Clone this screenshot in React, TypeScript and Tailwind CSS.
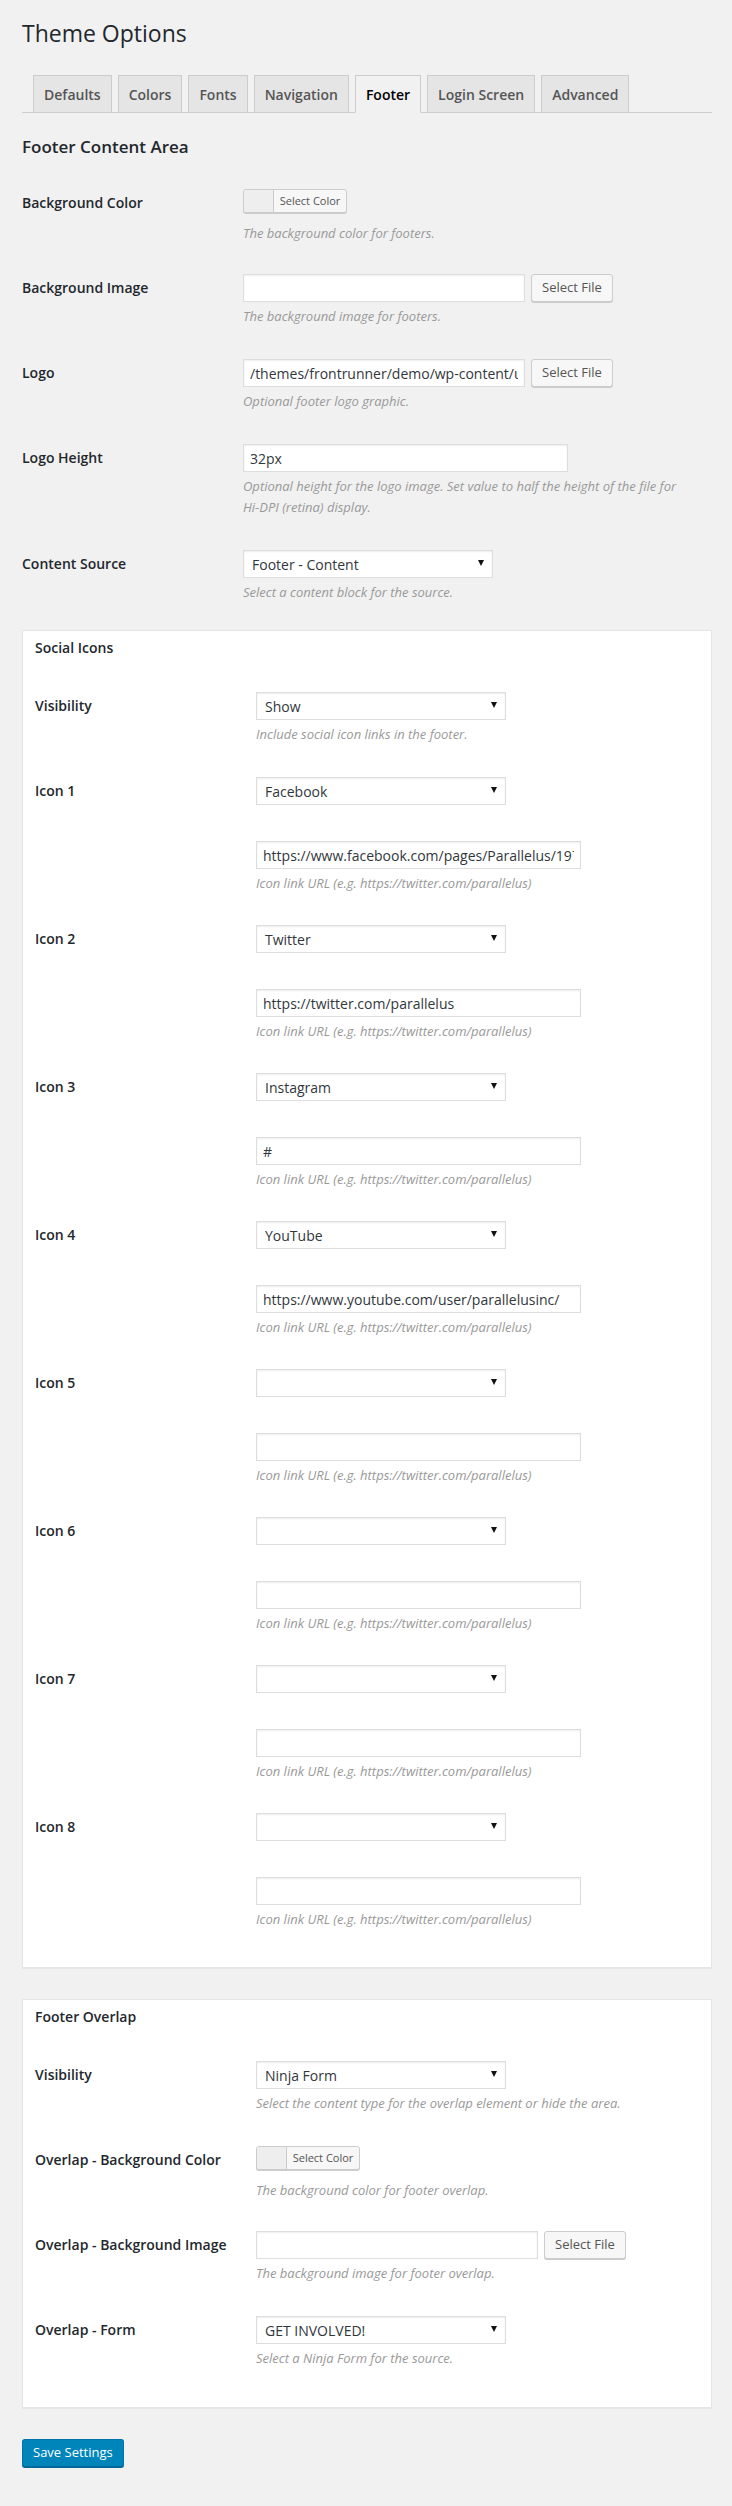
import React from "react";

const Label = ({ children }: { children?: React.ReactNode }) => (
  <div className="w-[221px] shrink-0 pt-[20px] text-[14px] leading-[18px] font-semibold text-[#23282d]">
    {children}
  </div>
);

const Desc = ({ children }: { children: React.ReactNode }) => (
  <p className="mt-[4px] max-w-[459px] text-[13px] leading-[21px] italic text-[#999]">{children}</p>
);

const TextInput = ({ value = "", w }: { value?: string; w: string }) => (
  <input
    defaultValue={value}
    className={`block h-[28px] ${w} border border-[#ddd] bg-white px-[6px] text-[14px] text-[#32373c] shadow-[inset_0_1px_2px_rgba(0,0,0,0.07)] outline-none`}
  />
);

const Select = ({ value = "" }: { value?: string }) => (
  <div className="flex h-[28px] w-[250px] items-center justify-between border border-[#ddd] bg-white pl-[8px] pr-[8px] text-[14px] text-[#32373c] shadow-[inset_0_1px_2px_rgba(0,0,0,0.07)]">
    <span>{value}</span>
    <svg width="6" height="6" viewBox="0 0 6 6" className="-mt-[3px]">
      <polygon points="0,0 6,0 3,6" fill="#111" />
    </svg>
  </div>
);

const FileButton = () => (
  <button className="ml-[6px] block h-[28px] rounded-[3px] border border-[#ccc] bg-[#f7f7f7] px-[10px] text-[13px] text-[#555] shadow-[0_1px_0_#ccc]">
    Select File
  </button>
);

const ColorPicker = () => (
  <div className="h-[30px]">
    <div className="flex h-[24px] w-[104px] overflow-hidden rounded-[3px] border border-[#ccc] bg-[#f7f7f7] shadow-[0_1px_0_#ccc]">
      <div className="w-[30px] shrink-0 border-r border-[#ccc] bg-[#eeeeee]" />
      <div className="flex flex-1 items-center justify-center text-[11px] text-[#555]">Select Color</div>
    </div>
  </div>
);

const Row = ({ label, children, pb = "pb-[17px]" }: { label: string; children: React.ReactNode; pb?: string }) => (
  <div className="flex">
    <Label>{label}</Label>
    <div className={`flex-1 pt-[15px] ${pb}`}>{children}</div>
  </div>
);

const IconRow = ({ n, sel, url }: { n: number; sel?: string; url?: string }) => (
  <div className="flex">
    <Label>{`Icon ${n}`}</Label>
    <div className="flex-1 pt-[15px] pb-[16px]">
      <Select value={sel} />
      <div className="mt-[36px]">
        <TextInput value={url} w="w-[325px]" />
      </div>
      <Desc>Icon link URL (e.g. https://twitter.com/parallelus)</Desc>
    </div>
  </div>
);

const Box = ({ title, children, mt }: { title: string; children: React.ReactNode; mt: string }) => (
  <div className={`${mt} border border-[#e5e5e5] bg-white px-[12px] pt-[7px] pb-[21px] shadow-[0_1px_1px_rgba(0,0,0,0.04)]`}>
    <h3 className="mb-[19px] text-[14px] leading-[20px] font-semibold text-[#23282d]">{title}</h3>
    {children}
  </div>
);

export default function App() {
  const tabs = ["Defaults", "Colors", "Fonts", "Navigation", "Footer", "Login Screen", "Advanced"];
  return (
    <div className="min-h-[2506px] bg-[#f1f1f1] font-['Open_Sans',sans-serif] text-[#444]">
      <div className="pl-[22px] pr-[20px] pb-[42px]">
        <h1 className="pt-[19px] text-[23px] leading-[29px] font-normal text-[#23282d]">Theme Options</h1>

        <div className="mt-[27px] flex items-end gap-[6px] border-b border-[#ccc] pl-[11px]">
          {tabs.map((t) => (
            <div
              key={t}
              className={
                t === "Footer"
                  ? "-mb-px flex h-[38px] items-center border border-[#ccc] border-b-[#f1f1f1] bg-[#f1f1f1] px-[10px] text-[14px] font-semibold text-[#000]"
                  : "-mb-px flex h-[38px] items-center border border-[#ccc] bg-[#e5e5e5] px-[10px] text-[14px] font-semibold text-[#555]"
              }
            >
              {t}
            </div>
          ))}
        </div>

        <h3 className="mt-[23px] text-[17px] leading-[22px] font-semibold text-[#23282d]">Footer Content Area</h3>

        <div className="mt-[16px]">
          <Row label="Background Color" pb="pb-[15px]">
            <ColorPicker />
            <Desc>The background color for footers.</Desc>
          </Row>
          <Row label="Background Image">
            <div className="flex">
              <TextInput w="w-[282px]" />
              <FileButton />
            </div>
            <Desc>The background image for footers.</Desc>
          </Row>
          <Row label="Logo">
            <div className="flex">
              <TextInput
                w="w-[282px]"
                value="/themes/frontrunner/demo/wp-content/uploads/sites/2/2015/10/logo-footer.png"
              />
              <FileButton />
            </div>
            <Desc>Optional footer logo graphic.</Desc>
          </Row>
          <Row label="Logo Height">
            <TextInput w="w-[325px]" value="32px" />
            <Desc>
              Optional height for the logo image. Set value to half the height of the file for{" "}
              <span className="whitespace-nowrap">Hi-DPI</span> (retina) display.
            </Desc>
          </Row>
          <Row label="Content Source">
            <Select value="Footer - Content" />
            <Desc>Select a content block for the source.</Desc>
          </Row>
        </div>

        <Box title="Social Icons" mt="mt-[10px]">
          <Row label="Visibility">
            <Select value="Show" />
            <Desc>Include social icon links in the footer.</Desc>
          </Row>
          <IconRow n={1} sel="Facebook" url="https://www.facebook.com/pages/Parallelus/197425150300383" />
          <IconRow n={2} sel="Twitter" url="https://twitter.com/parallelus" />
          <IconRow n={3} sel="Instagram" url="#" />
          <IconRow n={4} sel="YouTube" url="https://www.youtube.com/user/parallelusinc/" />
          <IconRow n={5} />
          <IconRow n={6} />
          <IconRow n={7} />
          <IconRow n={8} />
        </Box>

        <Box title="Footer Overlap" mt="mt-[31px]">
          <Row label="Visibility">
            <Select value="Ninja Form" />
            <Desc>Select the content type for the overlap element or hide the area.</Desc>
          </Row>
          <Row label="Overlap - Background Color" pb="pb-[15px]">
            <ColorPicker />
            <Desc>The background color for footer overlap.</Desc>
          </Row>
          <Row label="Overlap - Background Image">
            <div className="flex">
              <TextInput w="w-[282px]" />
              <FileButton />
            </div>
            <Desc>The background image for footer overlap.</Desc>
          </Row>
          <Row label="Overlap - Form">
            <Select value="GET INVOLVED!" />
            <Desc>Select a Ninja Form for the source.</Desc>
          </Row>
        </Box>

        <div className="mt-[31px]">
          <button className="block h-[28px] rounded-[3px] border border-[#0073aa] border-b-[#006799] bg-[#0085ba] px-[10px] text-[13px] text-white shadow-[0_1px_0_#006799]">
            Save Settings
          </button>
        </div>
      </div>
    </div>
  );
}
